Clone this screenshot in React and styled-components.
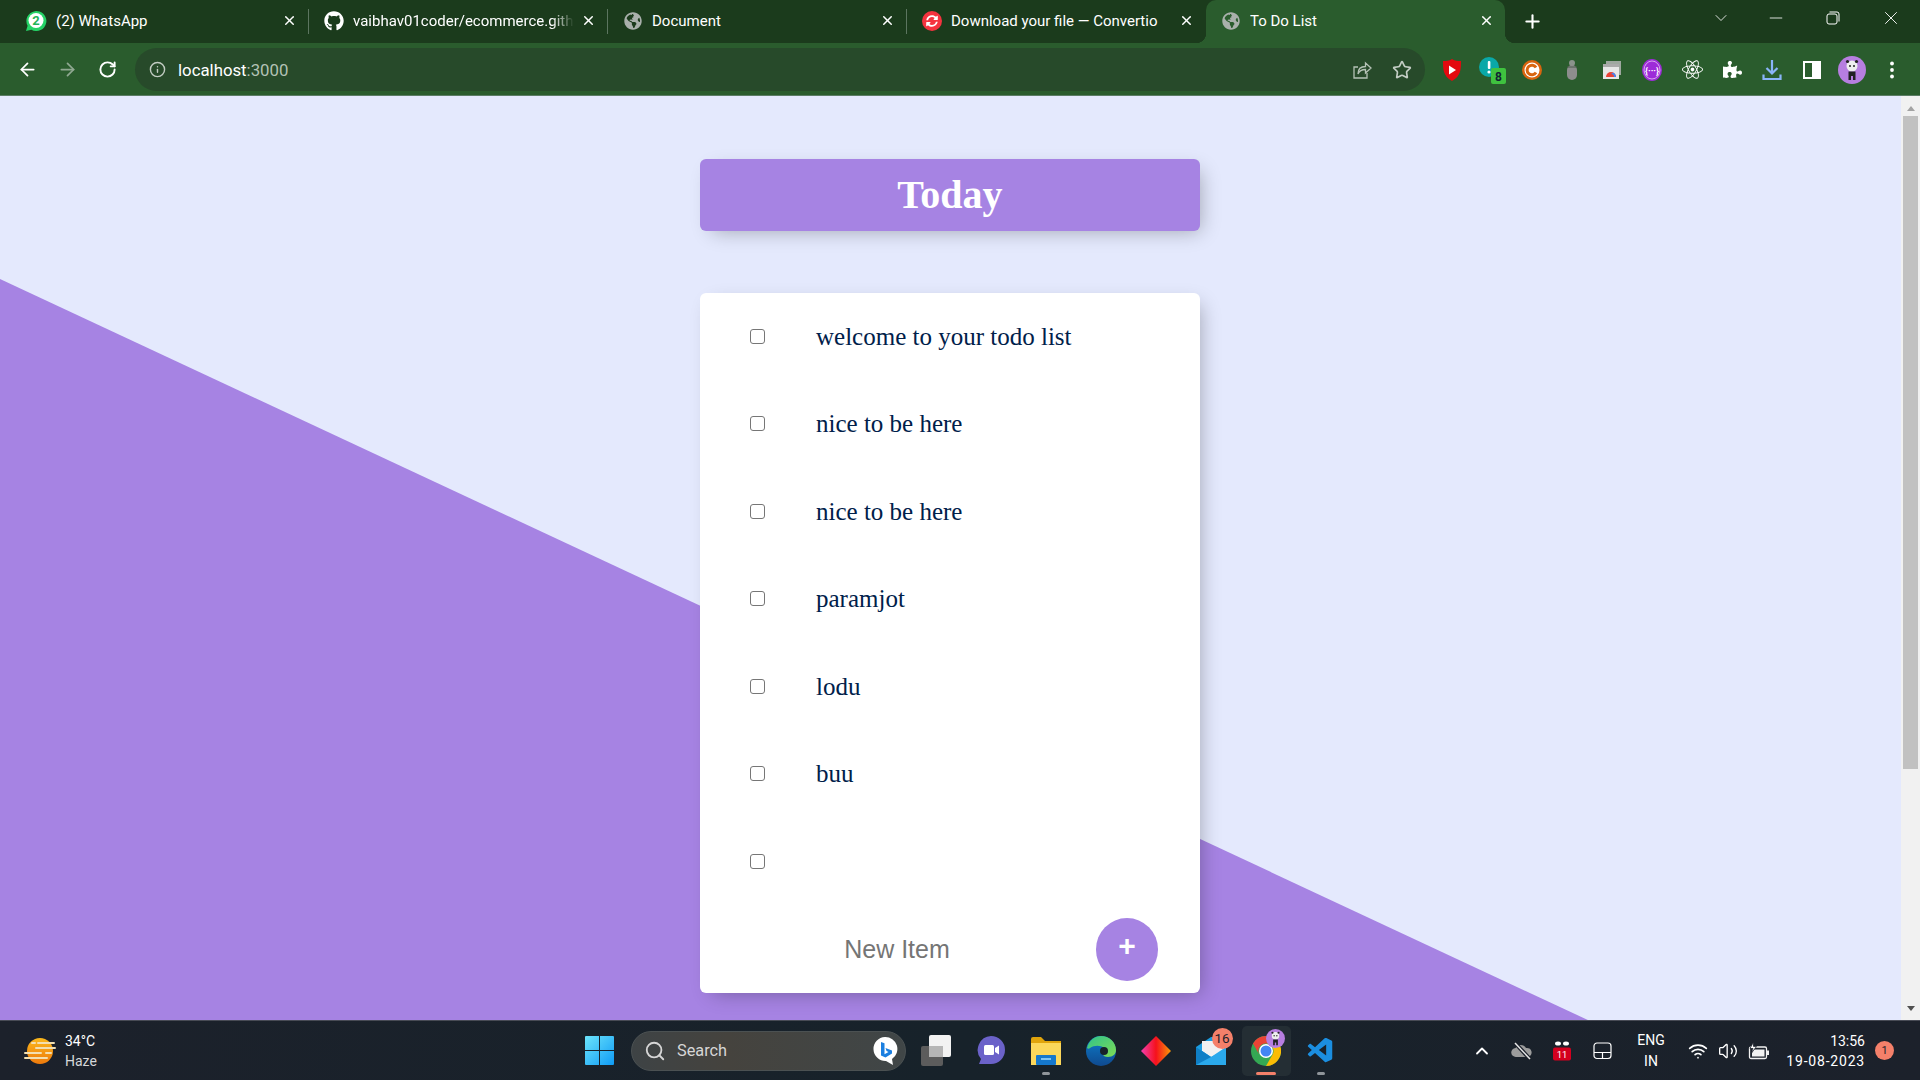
import React from "react";
import styled, { createGlobalStyle } from "styled-components";
import { ArrowLeft, ArrowRight, RotateCw, Info, Star, Search, Plus, X, ChevronDown, ChevronUp, Minus, Wifi, Volume2 } from "lucide-react";
import { FaGithub, FaGlobeAmericas, FaSyncAlt, FaReact, FaPuzzlePiece } from "react-icons/fa";
import { VscVscode } from "react-icons/vsc";

const GlobalStyle = createGlobalStyle`
  html, body {
    margin: 0;
    padding: 0;
    overflow: hidden;
  }
  * {
    box-sizing: border-box;
  }
`;

const Screen = styled.div`
  width: 1920px;
  height: 1080px;
  display: flex;
  flex-direction: column;
  overflow: hidden;
  font-family: Roboto, "Noto Sans", sans-serif;
`;

/* browser chrome */
const TabStrip = styled.div`
  height: 43px;
  flex: none;
  display: flex;
  align-items: stretch;
  padding-left: 10px;
  background: #1b3b1c;
  color: #fff;
`;

const Tab = styled.div`
  position: relative;
  flex: 0 0 ${(p) => (p.$active ? "299px" : "298px")};
  min-width: 0;
  display: flex;
  align-items: center;
  padding: 0 11px 2px 15px;
  font-size: 15px;
  border-radius: 10px 10px 0 0;
  background: ${(p) => (p.$active ? "#2a5c2d" : "transparent")};

  ${(p) =>
    p.$active &&
    `
    &::before, &::after {
      content: "";
      position: absolute;
      bottom: 0;
      width: 10px;
      height: 10px;
    }
    &::before {
      left: -10px;
      background: radial-gradient(circle at 0 0, transparent 10px, #2a5c2d 10.5px);
    }
    &::after {
      right: -10px;
      background: radial-gradient(circle at 100% 0, transparent 10px, #2a5c2d 10.5px);
    }
  `}
`;

const TabIcon = styled.span`
  flex: 0 0 20px;
  height: 20px;
  display: flex;
  align-items: center;
  justify-content: center;
  margin-right: 9px;
  color: ${(p) => p.$color || "#fff"};
`;

const TabTitle = styled.span`
  flex: 1;
  min-width: 0;
  white-space: nowrap;
  overflow: hidden;
  ${(p) => p.$fade && "mask-image: linear-gradient(to right, #000 90%, transparent 100%);"}
`;

const TabClose = styled.span`
  flex: 0 0 16px;
  display: flex;
  justify-content: center;
  margin-left: 6px;
`;

const TabDivider = styled.div`
  flex: 0 0 1px;
  height: 25px;
  margin-top: 9px;
  background: ${(p) => (p.$hidden ? "transparent" : "#5c7560")};
`;

const NewTab = styled.div`
  width: 54px;
  display: flex;
  align-items: center;
  justify-content: center;
`;

const WindowControls = styled.div`
  margin-left: auto;
  display: flex;
  align-items: flex-start;
  padding-top: 2px;
`;

const WindowButton = styled.div`
  width: ${(p) => p.$width}px;
  height: 32px;
  display: flex;
  align-items: center;
  justify-content: center;
`;

const Toolbar = styled.div`
  height: 53px;
  flex: none;
  display: flex;
  align-items: flex-start;
  padding-top: 5px;
  background: #2a5c2d;
  border-bottom: 1px solid #5a7c64;
  color: #fff;
`;

const NavButton = styled.div`
  width: 40px;
  height: 43px;
  display: flex;
  align-items: center;
  justify-content: center;
  color: ${(p) => p.$color || "#fff"};
`;

const NavGroup = styled.div`
  display: flex;
  padding-left: 7px;
  margin-right: 8px;
`;

const Omnibox = styled.div`
  width: 1290px;
  height: 43px;
  display: flex;
  align-items: center;
  padding-left: 14px;
  border-radius: 22px;
  background: #274a2a;
`;

const Url = styled.div`
  margin-left: 12px;
  font-size: 16.8px;
  color: #fff;
  span {
    color: #b3c2b5;
  }
`;

const OmniActions = styled.div`
  margin-left: auto;
  display: flex;
  padding-right: 3px;
`;

const ExtensionBar = styled.div`
  display: flex;
  margin-left: 7px;
`;

/* page */
const Viewport = styled.div`
  flex: 1;
  min-height: 0;
  display: flex;
`;

const Page = styled.main`
  position: relative;
  flex: 1;
  overflow: hidden;
  background: #e4e9fd;

  &::before {
    content: "";
    position: absolute;
    inset: 0;
    background: #a683e3;
    clip-path: polygon(0 183px, 1590px 925px, 0 925px);
  }
`;

const Column = styled.div`
  position: relative;
  width: 500px;
  margin: 62.5px 0 0 700px;
`;

const Heading = styled.div`
  height: 72px;
  display: flex;
  align-items: center;
  justify-content: center;
  border-radius: 6px;
  background: #a683e3;
  box-shadow: 6px 6px 19px -6px rgba(0, 0, 0, 0.3);
  margin-bottom: 62.5px;

  h1 {
    margin: 0;
    font: bold 40px "Liberation Serif", serif;
    color: #fff;
  }
`;

const Card = styled.div`
  border-radius: 6px;
  background: #fff;
  box-shadow: 6px 6px 19px -6px rgba(0, 0, 0, 0.3);
`;

const Row = styled.div`
  height: 87.5px;
  display: flex;
  align-items: center;
`;

const Check = styled.input`
  appearance: none;
  flex: none;
  width: 15px;
  height: 15px;
  margin: -1px 0 0 50px;
  background: #fff;
  border: 1.4px solid #767676;
  border-radius: 3px;
`;

const ItemText = styled.p`
  margin: 0;
  padding-left: 51px;
  font: 25px "Liberation Serif", serif;
  color: #00204a;
`;

const NewItemForm = styled.form`
  height: 87.5px;
  display: flex;
  align-items: center;
  padding-left: 1.5px;
`;

const NewItemInput = styled.input`
  width: 391px;
  height: 75px;
  border: none;
  outline: none;
  background: transparent;
  text-align: center;
  font: 25px "Liberation Sans", Arial, sans-serif;
  &::placeholder {
    color: #757575;
  }
`;

const AddButton = styled.button`
  width: 62px;
  height: 62.5px;
  margin-left: 3.5px;
  padding: 0 0 6px;
  border: none;
  border-radius: 50%;
  background: #a683e3;
  color: #fff;
  font: bold 30px "Liberation Sans", Arial, sans-serif;
`;

const ScrollTrack = styled.div`
  flex: 0 0 19px;
  display: flex;
  flex-direction: column;
  background: #f1f1f1;
`;

const ScrollArrow = styled.div`
  height: 20px;
  flex: none;
  display: flex;
  align-items: center;
  justify-content: center;
  ${(p) => (p.$down ? "padding-bottom: 4px;" : "padding-top: 4px;")}
  &::after {
    content: "";
    border-left: 4.5px solid transparent;
    border-right: 4.5px solid transparent;
    ${(p) => (p.$down ? "border-top: 5px solid #505050;" : "border-bottom: 5px solid #a3a3a3;")}
  }
`;

const ScrollThumb = styled.div`
  height: 653px;
  margin: 0 2px;
  background: #c1c1c1;
`;

const ScrollRest = styled.div`
  flex: 1;
`;

/* windows taskbar */
const Taskbar = styled.footer`
  height: 60px;
  flex: none;
  display: flex;
  align-items: center;
  border-top: 1px solid #484b55;
  background: linear-gradient(to right, #1c212b 0%, #17222a 50%, #1c212b 100%);
  color: #fff;
`;

const Weather = styled.div`
  flex: 0 0 585px;
  display: flex;
  align-items: center;
  padding-left: 24px;
`;

const WeatherText = styled.div`
  margin-left: 9px;
  font-size: 14px;
  line-height: 20px;
  span {
    display: block;
    color: #d5d7da;
  }
`;

const SearchBox = styled.div`
  width: 275px;
  height: 40px;
  margin-left: 17px;
  display: flex;
  align-items: center;
  padding-left: 12px;
  border-radius: 20px;
  border: 1px solid #4b5152;
  background: linear-gradient(to right, #3e4345, #45433e 35%, #404647);
  font-size: 16.3px;
  color: #d6d6d6;
`;

const SearchLabel = styled.span`
  margin-left: 11px;
`;

const BingSlot = styled.span`
  margin-left: auto;
  margin-right: 7px;
  display: flex;
`;

const TaskIcons = styled.div`
  display: flex;
  margin-left: 2.5px;
`;

const TaskIcon = styled.div`
  position: relative;
  width: 55px;
  height: 50px;
  display: flex;
  align-items: center;
  justify-content: center;

  ${(p) =>
    p.$active &&
    `
    &::before {
      content: "";
      position: absolute;
      inset: 0 3px 0 3px;
      border-radius: 5px;
      background: #242e34;
    }
  `}

  svg {
    position: relative;
  }

  ${(p) =>
    p.$dot &&
    `
    &::after {
      content: "";
      position: absolute;
      left: 50%;
      bottom: 1px;
      width: ${p.$active ? 20 : 8}px;
      height: 3px;
      margin-left: -${p.$active ? 10 : 4}px;
      border-radius: 2px;
      background: ${p.$active ? "#f4806a" : "#8f959a"};
    }
  `}
`;

const Badge = styled.span`
  position: absolute;
  top: 2px;
  right: 6px;
  min-width: 21px;
  height: 21px;
  display: flex;
  align-items: center;
  justify-content: center;
  border-radius: 50%;
  background: #f4806a;
  color: #1c212b;
  font-size: 13.5px;
`;

const ProfileBadge = styled.span`
  position: absolute;
  top: 3px;
  right: 9px;
  display: flex;
`;

const Tray = styled.div`
  margin-left: auto;
  display: flex;
  align-items: center;
  padding-right: 26px;
`;

const TraySlot = styled.div`
  width: ${(p) => p.$width || 40}px;
  display: flex;
  justify-content: center;
`;

const Lang = styled.div`
  width: 58px;
  margin-right: 3px;
  text-align: center;
  font-size: 14px;
  line-height: 21px;
`;

const Clock = styled.div`
  width: 92px;
  text-align: right;
  font-size: 14px;
  line-height: 20px;
`;

const DateLine = styled.div`
  letter-spacing: 0.8px;
  white-space: nowrap;
`;

const Notify = styled.span`
  width: 19px;
  height: 19px;
  margin-left: 10px;
  display: flex;
  align-items: center;
  justify-content: center;
  border-radius: 50%;
  background: #f4806a;
  color: #1c212b;
  font-size: 11px;
`;

const RedDisc = styled.span`
  display: flex;
  width: 20px;
  height: 20px;
  border-radius: 50%;
  background: #f5333f;
  align-items: center;
  justify-content: center;
`;

/* drawn icons */
const WhatsAppIcon = () => (
  <svg width="22" height="22" viewBox="0 0 22 22">
    <path d="M1 21l1.6-5.2A10 10 0 1 1 6.4 19.7z" fill="#25d366" />
    <circle cx="11" cy="10.5" r="7.5" fill="#fff" />
    <text x="11" y="15" textAnchor="middle" fontSize="13" fontWeight="700" fontFamily="Roboto" fill="#1fb457">2</text>
  </svg>
);

const ConvertioIcon = () => (
  <RedDisc>
    <FaSyncAlt size={12} color="#fff" />
  </RedDisc>
);

const ShareIcon = () => (
  <svg width="20" height="20" viewBox="0 0 20 20" fill="none" stroke="#b5c2b6" strokeWidth="1.3">
    <path d="M15 13v5H2V7h4" />
    <path d="M6 14c0-5 3-7.5 7.5-7.5V3L19 8l-5.5 5V9.500C10 9.500 7.500 10.500 6 14z" />
  </svg>
);

const YoutubeExt = () => (
  <svg width="20" height="24" viewBox="0 0 20 24">
    <path d="M10 1c3 2 6 2 9 2 0 8 0 15-9 20C1 18 1 11 1 3c3 0 6 0 9-2z" fill="#e4090f" />
    <path d="M7 7.5l7 4.5-7 4.5z" fill="#fff" />
  </svg>
);

const AlertExt = () => (
  <svg width="28" height="28" viewBox="0 0 28 28">
    <circle cx="11" cy="11" r="10" fill="#0aa8a8" />
    <rect x="9.8" y="5" width="2.6" height="8" rx="1" fill="#fff" />
    <circle cx="11" cy="16" r="1.6" fill="#fff" />
    <rect x="13" y="12" width="15" height="16" rx="2" fill="#3fc23f" />
    <text x="20.5" y="24.5" textAnchor="middle" fontSize="12" fontWeight="700" fontFamily="Roboto" fill="#123">8</text>
  </svg>
);

const CExt = () => (
  <svg width="20" height="20" viewBox="0 0 20 20">
    <circle cx="10" cy="10" r="10" fill="#d9650f" />
    <circle cx="10" cy="10" r="7.5" fill="#fff" />
    <path d="M14 7.5A4.8 4.8 0 1 0 14 12.5" fill="none" stroke="#d9650f" strokeWidth="3" />
  </svg>
);

const FigureExt = () => (
  <svg width="14" height="22" viewBox="0 0 14 22">
    <circle cx="7" cy="4" r="3" fill="#8a938b" />
    <path d="M2 11a5 5 0 0 1 10 0v5a5 5 0 0 1-10 0z" fill="#8d8d8d" />
    <path d="M2 8h10" stroke="#4a5a4c" />
  </svg>
);

const WindowsExt = () => (
  <svg width="20" height="20" viewBox="0 0 20 20">
    <rect x="4" y="1" width="15" height="14" fill="#9fa8a0" />
    <rect x="1" y="4" width="16" height="15" fill="#e7e7e7" />
    <path d="M4 17a5 5 0 0 1 10 0z" fill="#e94235" />
    <path d="M9 14a3 3 0 0 1 3 3h2a5 5 0 0 0-3-4.5z" fill="#4285f4" />
    <rect x="1" y="4" width="16" height="3" fill="#aaa" />
  </svg>
);

const BraceExt = () => (
  <svg width="20" height="22" viewBox="0 0 20 22">
    <ellipse cx="10" cy="11" rx="10" ry="11" fill="#9d2bd8" />
    <ellipse cx="10" cy="11" rx="8" ry="9" fill="none" stroke="#d8a6f0" strokeWidth="1" />
    <text x="10" y="14.5" textAnchor="middle" fontSize="9" fontWeight="700" fontFamily="Roboto" fill="#fff">{"{···}"}</text>
  </svg>
);

const DownloadIcon = () => (
  <svg width="20" height="22" viewBox="0 0 20 22" fill="none" stroke="#8ab4f8" strokeWidth="2.2">
    <path d="M10 1v13M4.5 9l5.500 5.500L15.500 9" />
    <path d="M1.5 15.500v4.500h17v-4.500" />
  </svg>
);

const SidebarIcon = () => (
  <svg width="18" height="18" viewBox="0 0 18 18">
    <path d="M0 0h18v18H0zM2 2v14h7V2z" fill="#fff" fillRule="evenodd" />
  </svg>
);

const AvatarIcon = ({ size = 28 }) => (
  <svg width={size} height={size} viewBox="0 0 28 28">
    <circle cx="14" cy="14" r="14" fill="#b77ee0" />
    <circle cx="14" cy="10" r="5.5" fill="#eee" />
    <circle cx="9.5" cy="5.5" r="1.6" fill="#222" />
    <circle cx="18.5" cy="5.500" r="1.6" fill="#222" />
    <circle cx="12" cy="10" r="1" fill="#222" />
    <circle cx="16" cy="10" r="1" fill="#222" />
    <path d="M10.5 15.500h7V24h-2.500v-4h-2v4h-2.500z" fill="#222" />
  </svg>
);

const DotsIcon = () => (
  <svg width="6" height="18" viewBox="0 0 6 18" fill="#fff">
    <circle cx="3" cy="2.5" r="1.9" />
    <circle cx="3" cy="9" r="1.9" />
    <circle cx="3" cy="15.5" r="1.9" />
  </svg>
);

const RestoreIcon = () => (
  <svg width="14" height="14" viewBox="0 0 14 14" fill="none" stroke="#fff" strokeWidth="1">
    <rect x="1" y="3" width="10" height="10" rx="2" />
    <path d="M3.5 1H11a2 2 0 0 1 2 2v7.5" />
  </svg>
);

const WeatherIcon = () => (
  <svg width="32" height="28" viewBox="0 0 32 28">
    <defs>
      <linearGradient id="sun" x1="0" y1="0" x2="0" y2="1">
        <stop offset="0" stopColor="#fbb81c" />
        <stop offset="1" stopColor="#ee7a0c" />
      </linearGradient>
    </defs>
    <circle cx="16" cy="14" r="13" fill="url(#sun)" />
    <g stroke="#f3dfb0" strokeWidth="2" strokeLinecap="round">
      <path d="M8 6h3M14 6h16M12 11h19M1 16h16M22 16h5M1 21h22" />
    </g>
  </svg>
);

const WindowsLogo = () => (
  <svg width="29" height="29" viewBox="0 0 29 29">
    <defs>
      <linearGradient id="win" x1="0" y1="0" x2="1" y2="1">
        <stop offset="0" stopColor="#6ce4fb" />
        <stop offset="1" stopColor="#0f9bf5" />
      </linearGradient>
    </defs>
    <path d="M0 1a1 1 0 0 1 1-1h13v14H0zM15 0h13a1 1 0 0 1 1 1v13H15zM0 15h14v14H1a1 1 0 0 1-1-1zM15 15h14v13a1 1 0 0 1-1 1H15z" fill="url(#win)" />
  </svg>
);

const BingIcon = () => (
  <svg width="26" height="30" viewBox="0 0 26 30">
    <path d="M13 1a12 12 0 0 1 7 22l1 6-7-4A12 12 0 1 1 13 1z" fill="#fff" />
    <path d="M9 6l3.5 1.2v11l4-2.2-2-1-1-3 6.5 2.5v3l-6.5 4-4.5-2z" fill="#1b7fe0" />
  </svg>
);

const TaskViewIcon = () => (
  <svg width="30" height="31" viewBox="0 0 30 31">
    <rect x="0" y="11" width="22" height="20" rx="2" fill="#5c5c5c" />
    <rect x="8" y="0" width="22" height="22" rx="2" fill="#f2f2f2" />
    <rect x="8" y="11" width="14" height="11" fill="#b5b5b5" />
  </svg>
);

const TeamsIcon = () => (
  <svg width="28" height="30" viewBox="0 0 28 30">
    <path d="M14 0a14 14 0 0 1 0 28H2l2-5A14 14 0 0 1 14 0z" fill="#6b62c9" />
    <rect x="7" y="9" width="10" height="10" rx="1.5" fill="#fff" />
    <path d="M18 12l4-2.5v9L18 16z" fill="#fff" />
  </svg>
);

const FolderIcon = () => (
  <svg width="30" height="28" viewBox="0 0 30 28">
    <path d="M0 2a2 2 0 0 1 2-2h8l4 4h16v24H0z" fill="#e0a40c" />
    <rect x="0" y="6" width="30" height="22" fill="#fbd75b" />
    <rect x="5" y="18" width="20" height="10" rx="1" fill="#1578cc" />
    <rect x="10" y="21" width="10" height="2" fill="#7dc4f5" />
  </svg>
);

const EdgeIcon = () => (
  <svg width="30" height="30" viewBox="0 0 30 30">
    <defs>
      <linearGradient id="edgeA" x1="0" y1="0" x2="1" y2="1">
        <stop offset="0" stopColor="#2fc28c" />
        <stop offset="1" stopColor="#7fdc54" />
      </linearGradient>
      <linearGradient id="edgeB" x1="0" y1="0" x2="0" y2="1">
        <stop offset="0" stopColor="#0d7dcc" />
        <stop offset="1" stopColor="#0f4a8f" />
      </linearGradient>
    </defs>
    <circle cx="15" cy="15" r="15" fill="url(#edgeB)" />
    <path d="M1 12C3 4 9 0 15 0c8 0 15 6 15 14 0 4-3 7-8 7-3 0-5-1-5-3 2-1 3-3 1-6-3-3-10-3-14 0-1 1-2 1-3 0z" fill="url(#edgeA)" />
    <circle cx="18" cy="15" r="4" fill="#17222a" />
  </svg>
);

const GemIcon = () => (
  <svg width="30" height="30" viewBox="0 0 30 30">
    <defs>
      <linearGradient id="gem" x1="0" y1="0" x2="1" y2="0">
        <stop offset="0" stopColor="#f23fb0" />
        <stop offset="0.5" stopColor="#f5111c" />
        <stop offset="1" stopColor="#fa9a08" />
      </linearGradient>
    </defs>
    <path d="M15 0l15 15-15 15L0 15z" fill="url(#gem)" />
  </svg>
);

const MailIcon = () => (
  <svg width="30" height="28" viewBox="0 0 30 28">
    <path d="M0 10L15 0h15v28H0z" fill="#1b9de2" />
    <path d="M6 4h22v10L15 20 6 14z" fill="#f1f1f1" />
    <path d="M0 10l15 10 15-10v18H0z" fill="#2aa9ec" />
    <path d="M0 10l15 10L0 28z" fill="#0f7fc6" />
  </svg>
);

const ChromeIcon = () => (
  <svg width="30" height="30" viewBox="0 0 30 30">
    <circle cx="15" cy="15" r="15" fill="#34a853" />
    <path d="M15 0a15 15 0 0 1 13 7.5H15A7.5 7.5 0 0 0 8.5 19L2 7.5A15 15 0 0 1 15 0z" fill="#ea4335" />
    <path d="M28 7.5A15 15 0 0 1 15 30l6.5-11.25A7.5 7.5 0 0 0 15 7.5z" fill="#fbbc05" />
    <circle cx="15" cy="15" r="7" fill="#fff" />
    <circle cx="15" cy="15" r="5.5" fill="#4285f4" />
  </svg>
);

const CloudOffIcon = () => (
  <svg width="22" height="20" viewBox="0 0 22 20">
    <path d="M5 16a4.5 4.5 0 0 1-.5-9A6 6 0 0 1 15 7a4.500 4.500 0 0 1 2 9z" fill="#9c9c9c" />
    <path d="M4 2l15 16" stroke="#1c212b" strokeWidth="4" />
    <path d="M4 2l15 16" stroke="#e8e8e8" strokeWidth="1.5" />
  </svg>
);

const GiftIcon = () => (
  <svg width="20" height="20" viewBox="0 0 20 20">
    <ellipse cx="6" cy="2.5" rx="3" ry="2" fill="#fff" />
    <ellipse cx="14" cy="2.5" rx="3" ry="2" fill="#fff" />
    <rect x="1" y="6.5" width="18" height="13" rx="2" fill="#d4001f" />
    <text x="10" y="17" textAnchor="middle" fontSize="9.5" fontFamily="Roboto" fill="#fff">11</text>
  </svg>
);

const TouchpadIcon = () => (
  <svg width="19" height="18" viewBox="0 0 19 18" fill="none" stroke="#fff" strokeWidth="1.2">
    <rect x="1" y="1" width="17" height="15.5" rx="3" />
    <path d="M1 10.5h17M9.5 10.5v6" />
  </svg>
);

const BatteryIcon = () => (
  <svg width="21" height="18" viewBox="0 0 21 18">
    <rect x="1.5" y="5" width="17" height="11.5" rx="1.5" fill="none" stroke="#f2f2f2" strokeWidth="1.3" />
    <rect x="4" y="7.5" width="12.5" height="7" fill="#f2f2f2" />
    <rect x="19" y="8.5" width="2" height="4.5" fill="#f2f2f2" />
    <path d="M5.5 0L2 6.5h3L3.500 11 8.500 4.500H5.500z" fill="#fff" stroke="#1c212b" strokeWidth="0.8" />
  </svg>
);

const tabs = [
  { title: "(2) WhatsApp", icon: <WhatsAppIcon /> },
  { title: "vaibhav01coder/ecommerce.github.io", icon: <FaGithub size={20} />, fade: true },
  { title: "Document", icon: <FaGlobeAmericas size={18} />, color: "#a9b0ab" },
  { title: "Download your file — Convertio", icon: <ConvertioIcon />, hideDivider: true },
  { title: "To Do List", icon: <FaGlobeAmericas size={18} />, color: "#a9b0ab", active: true },
];

const extensions = [
  <YoutubeExt />,
  <AlertExt />,
  <CExt />,
  <FigureExt />,
  <WindowsExt />,
  <BraceExt />,
  <FaReact size={21} />,
  <FaPuzzlePiece size={19} />,
  <DownloadIcon />,
  <SidebarIcon />,
  <AvatarIcon />,
  <DotsIcon />,
];

const todos = ["welcome to your todo list", "nice to be here", "nice to be here", "paramjot", "lodu", "buu", ""];

export default function App() {
  return (
    <Screen>
      <GlobalStyle />
      <TabStrip>
        {tabs.map((tab) => (
          <React.Fragment key={tab.title}>
            <Tab $active={tab.active}>
              <TabIcon $color={tab.color}>{tab.icon}</TabIcon>
              <TabTitle $fade={tab.fade}>{tab.title}</TabTitle>
              <TabClose>
                <X size={15} strokeWidth={2.4} />
              </TabClose>
            </Tab>
            {!tab.active && <TabDivider $hidden={tab.hideDivider} />}
          </React.Fragment>
        ))}
        <NewTab>
          <Plus size={21} strokeWidth={2.4} />
        </NewTab>
        <WindowControls>
          <WindowButton $width={53}>
            <ChevronDown size={20} strokeWidth={1} />
          </WindowButton>
          <WindowButton $width={57}>
            <Minus size={20} strokeWidth={1} />
          </WindowButton>
          <WindowButton $width={58}>
            <RestoreIcon />
          </WindowButton>
          <WindowButton $width={58}>
            <X size={22} strokeWidth={1} />
          </WindowButton>
        </WindowControls>
      </TabStrip>

      <Toolbar>
        <NavGroup>
          <NavButton>
            <ArrowLeft size={21} />
          </NavButton>
          <NavButton $color="#8fa891">
            <ArrowRight size={21} />
          </NavButton>
          <NavButton>
            <RotateCw size={19} strokeWidth={2.4} />
          </NavButton>
        </NavGroup>
        <Omnibox>
          <Info size={17} color="#c3cdc4" />
          <Url>
            localhost<span>:3000</span>
          </Url>
          <OmniActions>
            <NavButton>
              <ShareIcon />
            </NavButton>
            <NavButton>
              <Star size={20} color="#c3cdc4" />
            </NavButton>
          </OmniActions>
        </Omnibox>
        <ExtensionBar>
          {extensions.map((icon, i) => (
            <NavButton key={i}>{icon}</NavButton>
          ))}
        </ExtensionBar>
      </Toolbar>

      <Viewport>
        <Page>
          <Column>
            <Heading>
              <h1>Today</h1>
            </Heading>
            <Card>
              {todos.map((text, i) => (
                <Row key={i}>
                  <Check type="checkbox" />
                  <ItemText>{text}</ItemText>
                </Row>
              ))}
              <NewItemForm>
                <NewItemInput type="text" placeholder="New Item" />
                <AddButton type="button">+</AddButton>
              </NewItemForm>
            </Card>
          </Column>
        </Page>
        <ScrollTrack>
          <ScrollArrow />
          <ScrollThumb />
          <ScrollRest />
          <ScrollArrow $down />
        </ScrollTrack>
      </Viewport>

      <Taskbar>
        <Weather>
          <WeatherIcon />
          <WeatherText>
            34°C
            <span>Haze</span>
          </WeatherText>
        </Weather>
        <WindowsLogo />
        <SearchBox>
          <Search size={22} />
          <SearchLabel>Search</SearchLabel>
          <BingSlot>
            <BingIcon />
          </BingSlot>
        </SearchBox>
        <TaskIcons>
          <TaskIcon>
            <TaskViewIcon />
          </TaskIcon>
          <TaskIcon>
            <TeamsIcon />
          </TaskIcon>
          <TaskIcon $dot>
            <FolderIcon />
          </TaskIcon>
          <TaskIcon>
            <EdgeIcon />
          </TaskIcon>
          <TaskIcon>
            <GemIcon />
          </TaskIcon>
          <TaskIcon>
            <MailIcon />
            <Badge>16</Badge>
          </TaskIcon>
          <TaskIcon $dot $active>
            <ChromeIcon />
            <ProfileBadge>
              <AvatarIcon size={19} />
            </ProfileBadge>
          </TaskIcon>
          <TaskIcon $dot>
            <VscVscode size={30} color="#1b8ee0" />
          </TaskIcon>
        </TaskIcons>
        <Tray>
          <TraySlot>
            <ChevronUp size={20} strokeWidth={2.2} />
          </TraySlot>
          <TraySlot>
            <CloudOffIcon />
          </TraySlot>
          <TraySlot>
            <GiftIcon />
          </TraySlot>
          <TraySlot>
            <TouchpadIcon />
          </TraySlot>
          <Lang>
            ENG
            <br />
            IN
          </Lang>
          <TraySlot $width={30}>
            <Wifi size={20} />
          </TraySlot>
          <TraySlot $width={30}>
            <Volume2 size={20} strokeWidth={1.6} />
          </TraySlot>
          <TraySlot $width={30}>
            <BatteryIcon />
          </TraySlot>
          <Clock>
            13:56
            <DateLine>19-08-2023</DateLine>
          </Clock>
          <Notify>1</Notify>
        </Tray>
      </Taskbar>
    </Screen>
  );
}
